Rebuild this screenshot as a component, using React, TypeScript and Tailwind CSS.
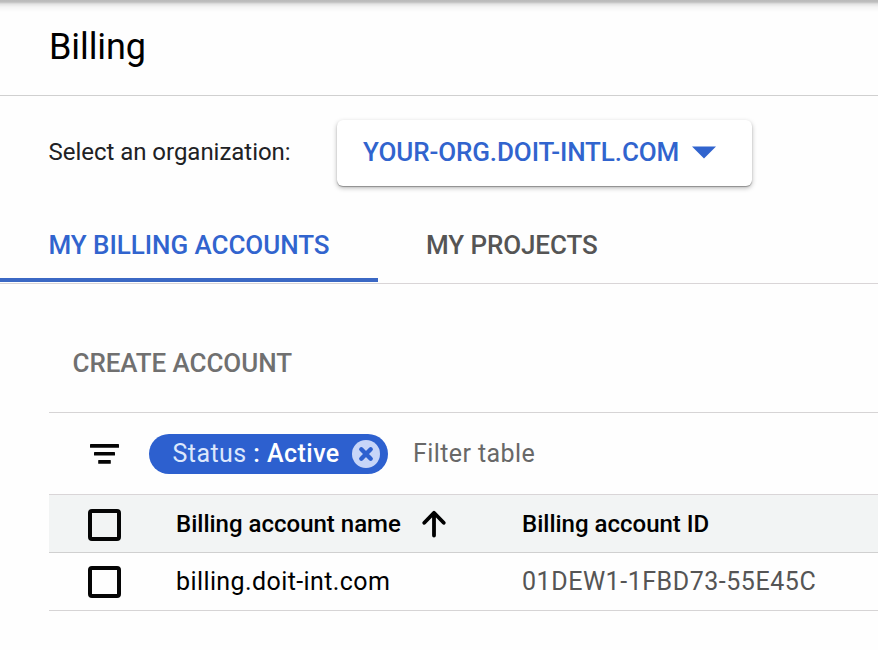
import React from "react";

const Checkbox = () => (
  <div role="checkbox" aria-checked={false} className="h-8 w-[33px] shrink-0 rounded-[4px] border-4 border-[#050505]" />
);

const FilterIcon = () => (
  <svg width="29" height="20" viewBox="0 0 29 20" className="shrink-0" fill="#050505">
    <rect x="0" y="0" width="29" height="3.8" rx="0.6" />
    <rect x="4" y="8" width="21" height="3.6" rx="0.6" />
    <rect x="8.2" y="16" width="12.6" height="3.8" rx="0.6" />
  </svg>
);

const ArrowUp = () => (
  <svg width="24" height="28" viewBox="0 0 24 28" fill="none" stroke="#000" strokeWidth="3.8" strokeLinecap="round" strokeLinejoin="round">
    <path d="M12 25.5V3M2.3 12.8 12 2.8l9.7 10" />
  </svg>
);

const CloseIcon = () => (
  <svg width="28" height="28" viewBox="0 0 28 28" className="shrink-0">
    <circle cx="14" cy="14" r="14" fill="#c7d5f8" />
    <path d="m9.3 9.3 9.4 9.4m0-9.4-9.4 9.4" stroke="#2d60cf" strokeWidth="4.4" strokeLinecap="round" />
  </svg>
);

export default function App() {
  return (
    <div className="flex h-[650px] w-[878px] flex-col overflow-hidden whitespace-nowrap bg-[#fefefe] font-[Roboto,sans-serif] text-black">
      <div className="h-3 shrink-0 bg-[linear-gradient(to_bottom,#b9b9b9_0px,#bebebe_2px,#e2e2e2_4px,#f4f4f4_7px,#fefefe_12px)]" />
      <header className="flex h-[84px] shrink-0 items-center border-b border-[#d0d0d0] pb-[13px] pl-[49px]">
        <h1 className="text-[36px] leading-none tracking-[-0.1px]">Billing</h1>
      </header>

      <div className="flex h-[114px] shrink-0 items-center pl-[48.5px]">
        <span className="w-[288.5px] pb-[2px] text-[24px] leading-none tracking-[-0.03px] text-[#202124]">Select an organization:</span>
        <button className="flex h-[66px] w-[415px] items-center rounded-[6px] bg-white pb-px pl-[26px] text-[26px] font-medium text-[#3164ce] shadow-[0_1px_1px_rgba(0,0,0,.3),0_2px_5px_rgba(0,0,0,.28)]">
          <span className="w-[329px] text-left tracking-[-0.1px]">YOUR-ORG.DOIT-INTL.COM</span>
          <svg width="24" height="13" viewBox="0 0 24 13" fill="#3164ce"><path d="M0 .5h24L12 12.5z" /></svg>
        </button>
      </div>

      <nav className="flex h-[74px] shrink-0 border-b border-[#d9d5d7] text-[26px] font-medium leading-none">
        <div className="flex h-[72px] w-[378px] border-b-4 border-[#3b68c4] pl-[48.5px] pt-[22px] text-[#3164ce]">
          <span className="tracking-[-0.05px]">MY BILLING ACCOUNTS</span>
        </div>
        <div className="pl-[48px] pt-[22px] tracking-[-0.1px] text-[#555]">MY PROJECTS</div>
      </nav>

      <main className="ml-[48.5px] flex flex-col">
        <div className="flex h-[129px] items-center border-b border-[#d6d4d5] pl-6 pt-[29px] text-[26px] font-medium leading-none tracking-[-0.08px] text-[#707070]">
          CREATE ACCOUNT
        </div>
        <div className="flex h-[82px] items-center border-b border-[#d9d5d7] pl-[41px]">
          <FilterIcon />
          <div className="ml-[30px] flex h-10 w-[239.5px] shrink-0 items-center rounded-full bg-[#2d60cf] pl-6">
            <span className="w-[179px] text-[25px] leading-none tracking-[0.45px] text-[#dce7fc]">
              Status <span className="font-medium text-white">: Active</span>
            </span>
            <CloseIcon />
          </div>
          <span className="ml-[25px] text-[25px] leading-none tracking-[0.4px] text-[#686868]">Filter table</span>
        </div>
        <div className="flex h-[58px] items-center border-b border-[#d0d0d0] bg-[#f2f4f4] pl-[39px] text-[24px] font-medium leading-none">
          <div className="mt-[3px]"><Checkbox /></div>
          <div className="ml-[55.5px] flex w-[346px] items-center">
            <span className="w-[245.5px]">Billing account name</span>
            <ArrowUp />
          </div>
          <span>Billing account ID</span>
        </div>
        <div className="flex h-[58px] items-center border-b border-[#d6d4d5] pl-[39px] text-[25px] leading-none">
          <Checkbox />
          <span className="ml-[55.5px] w-[346px] tracking-[0.4px]">billing.doit-int.com</span>
          <span className="tracking-[0.54px] text-[#555]">01DEW1-1FBD73-55E45C</span>
        </div>
      </main>
    </div>
  );
}
